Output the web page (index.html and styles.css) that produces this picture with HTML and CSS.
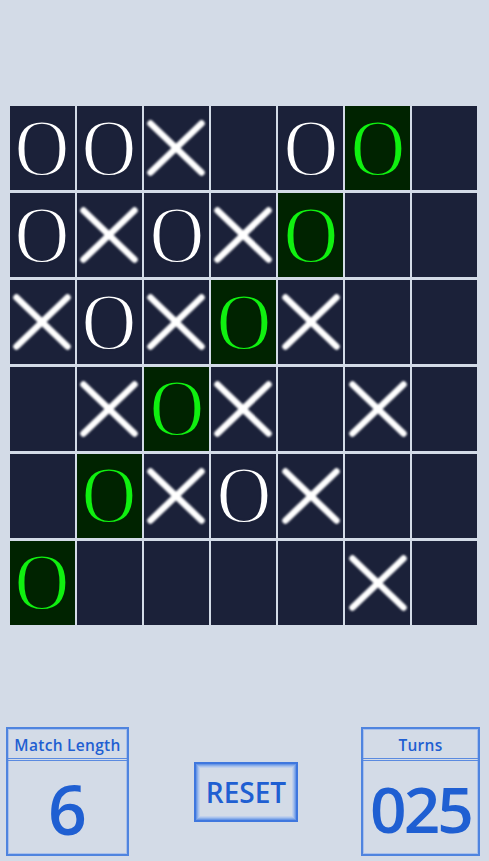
FILE: index.html
```html
<!DOCTYPE html>
<html lang="en">

<head>
  <meta charset="UTF-8">
  <meta name="viewport" content="width=device-width, initial-scale=1.0">
  <title>Tic Tac Toe</title>
  <link rel="stylesheet" href="styles.css">
</head>

<body>
  <main class="game">
    <div class="board"></div>
    <div class="panel">
      <div class="stat">
        <div class="stat-head">Match Length</div>
        <div class="stat-value">6</div>
      </div>
      <button class="reset">RESET</button>
      <div class="stat stat-right">
        <div class="stat-head">Turns</div>
        <div class="stat-value turns">025</div>
      </div>
    </div>
  </main>
  <script>
    // o = white O, g = winning (green) O, x = X, _ = empty
    const rows = [
      "oox_og_",
      "oxoxg__",
      "xoxgx__",
      "_xgx_x_",
      "_gxox__",
      "g____x_"
    ];
    const xMark = '<svg class="x" width="58" height="56" viewBox="0 0 58 56">' +
      '<line x1="3.5" y1="3.5" x2="54.5" y2="52.5"/><line x1="54.5" y1="3.5" x2="3.5" y2="52.5"/></svg>';
    let html = "";
    rows.forEach(row => {
      row.split("").forEach(c => {
        if (c === "x") html += `<div class="cell">${xMark}</div>`;
        else if (c === "o") html += `<div class="cell"><span class="o">O</span></div>`;
        else if (c === "g") html += `<div class="cell win"><span class="o">O</span></div>`;
        else html += `<div class="cell"></div>`;
      });
    });
    document.querySelector(".board").innerHTML = html;
  </script>
</body>

</html>
```

FILE: styles.css
```css
body {
  margin: 0;
  padding: 0;
  width: 489px;
  height: 861px;
  overflow: hidden;
  background: #d3dbe7;
  font-family: "Open Sans", "Noto Sans", sans-serif;
}

.game {
  display: flex;
  flex-direction: column;
  height: 100%;
}

.board {
  display: grid;
  grid-template-columns: repeat(7, 1fr);
  grid-template-rows: repeat(6, 1fr);
  gap: 2.5px;
  width: 467px;
  height: 519px;
  margin: 106px 0 0 10px;
}

.cell {
  display: flex;
  align-items: center;
  justify-content: center;
  background: #1b2139;
}

.cell.win {
  background: #002300;
}

/* thin the serif O a little with a stroke in the cell colour */
.o {
  font-family: "Liberation Serif", serif;
  font-size: 80px;
  line-height: 1;
  color: #fff;
  -webkit-text-stroke: 2px #1b2139;
  transform: scaleX(0.95);
  filter: blur(0.7px);
  margin-top: -1px;
}

.win .o {
  color: #10f010;
  -webkit-text-stroke-color: #002300;
}

.x {
  filter: blur(0.8px);
}

.x line {
  stroke: #fff;
  stroke-width: 6.5;
  stroke-linecap: round;
}

.panel {
  display: flex;
  justify-content: space-between;
  align-items: center;
  margin-top: 102px;
  padding: 0 9px 0 6px;
}

.stat {
  width: 123px;
  height: 129px;
  box-sizing: border-box;
  border: 2px solid #4f84df;
  box-shadow: inset 0 0 0 1px #a9c0eb;
  display: flex;
  flex-direction: column;
  color: #1f5fd2;
}

.stat-right {
  width: 119px;
}

.stat-head {
  height: 32px;
  box-sizing: border-box;
  border-bottom: 3px double #5a8ae0;
  display: flex;
  align-items: center;
  justify-content: center;
  font-size: 15.5px;
  font-weight: 600;
  letter-spacing: 0.3px;
  padding-top: 2px;
}

.stat-value {
  flex: 1;
  display: flex;
  align-items: center;
  justify-content: center;
  font-size: 68px;
  font-weight: 600;
  line-height: 1;
  padding-top: 2px;
}

.stat-value.turns {
  font-size: 64px;
  letter-spacing: -3px;
}

.reset {
  width: 104px;
  height: 60px;
  margin-left: 2px;
  box-sizing: border-box;
  border: 2px solid #3f77de;
  box-shadow: inset 0 0 0 1px #6a97e6, inset 0 0 0 2px #8aaee9, inset 0 0 0 3px #a9c2ec, inset 0 0 0 4px #c0d0ec;
  background: #d3dbe7;
  color: #1f5fd2;
  font-family: "Open Sans", "Noto Sans", sans-serif;
  font-size: 28px;
  font-weight: 600;
  padding: 0;
}
```
